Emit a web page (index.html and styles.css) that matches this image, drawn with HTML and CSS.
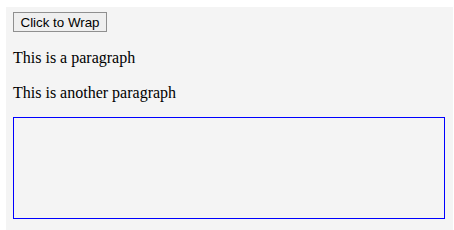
FILE: index.html
```html
<!DOCTYPE html>
<html>
<head>
<meta charset="utf-8">
<link rel="stylesheet" href="styles.css">
</head>
<body>
<div class="wrap">
  <button class="btn">Click to Wrap</button>
  <p class="para">This is a paragraph</p>
  <p class="para">This is another paragraph</p>
  <div class="box"></div>
</div>
</body>
</html>
```
FILE: styles.css
```css
html, body {
  margin: 0;
  padding: 0;
  background: #ffffff;
}
body {
  font-family: "Liberation Serif", "Times New Roman", serif;
  font-size: 16px;
}
.wrap {
  margin: 7px 1px 0 6px;
  padding: 5px 8px 11px 7px;
  background: #f4f4f4;
  display: flow-root;
}
.btn {
  display: block;
  font-family: "Liberation Sans", Arial, sans-serif;
  font-size: 13.33px;
  height: 20px;
  width: 94px;
  padding: 0;
  margin: 0;
  color: #000;
  background: #efefef;
  border: 1px solid #8f8f8f;
  border-radius: 0;
}
.para {
  margin: 16px 0 15px;
  padding-top: 1px;
  line-height: 18px;
}
.box {
  margin-top: 15px;
  height: 100px;
  border: 1px solid #0000ff;
}
```
